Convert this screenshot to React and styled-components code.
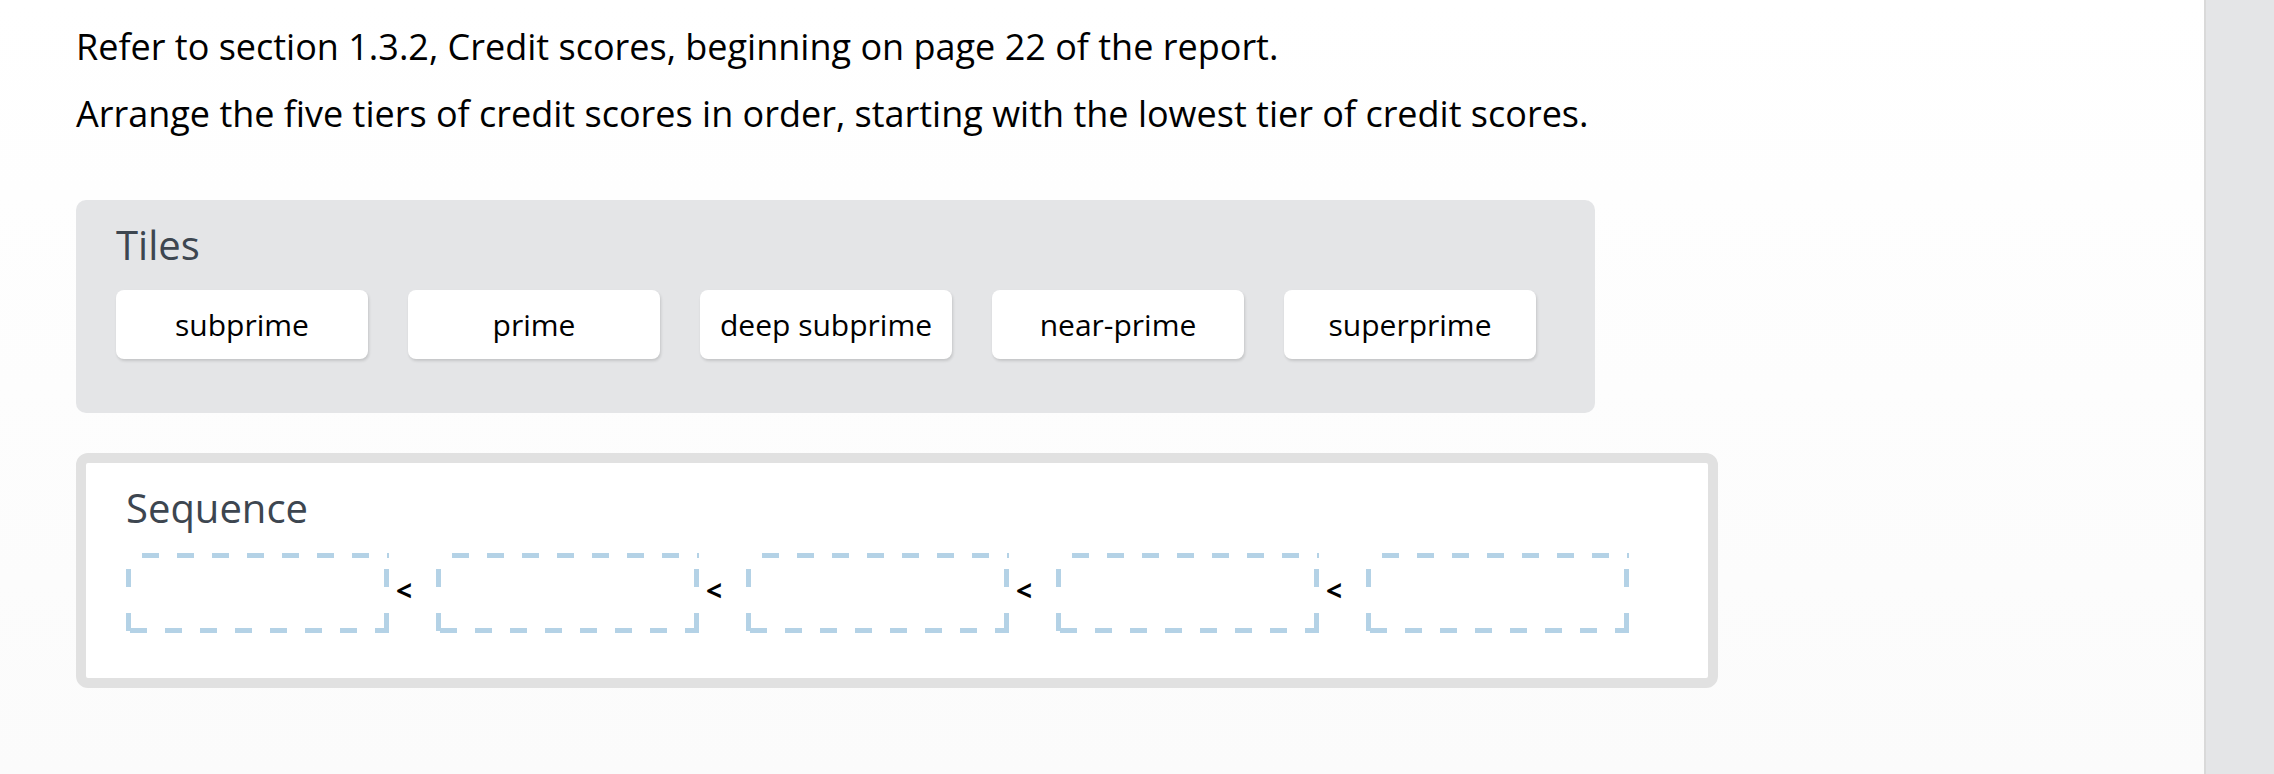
import React from "react";
import styled, { createGlobalStyle } from "styled-components";

const GlobalStyle = createGlobalStyle`
  html, body {
    margin: 0;
    padding: 0;
    background: #ffffff;
  }
  body {
    font-family: "Open Sans", "Noto Sans", "Liberation Sans", sans-serif;
    color: #000000;
  }
  * { box-sizing: border-box; }
`;

const Page = styled.div`
  display: flex;
  width: 2274px;
  height: 774px;
  overflow: hidden;
  background: linear-gradient(#ffffff, #fbfbfb);
`;

const Main = styled.main`
  flex: 1;
  padding: 25px 0 0 76px;
`;

const Rail = styled.aside`
  width: 70px;
  background: #e4e5e7;
  border-left: 2px solid #d9d9d9;
`;

const Prompt = styled.p`
  margin: 0 0 ${(p) => p.$gap || 0}px 0;
  font-size: 36px;
  line-height: 44px;
  color: #000;
`;

const TilesPanel = styled.section`
  margin-top: 64px;
  width: 1519px;
  background: #e4e5e7;
  border-radius: 10px;
  padding: 20px 40px 54px 40px;
`;

const SequencePanel = styled.section`
  margin-top: 40px;
  width: 1642px;
  background: #ffffff;
  border: 10px solid #e1e1e1;
  border-radius: 12px;
  padding: 20px 40px 45px 40px;
`;

const Label = styled.h2`
  margin: 0 0 20px 0;
  font-size: 40px;
  line-height: 50px;
  font-weight: 400;
  color: #3d4650;
`;

const TileRow = styled.div`
  display: flex;
  gap: 40px;
`;

const Tile = styled.div`
  width: 252px;
  height: 69px;
  background: #ffffff;
  border-radius: 8px;
  box-shadow: 1px 2px 3px rgba(0, 0, 0, 0.14);
  display: flex;
  align-items: center;
  justify-content: center;
  font-size: 30px;
  color: #000;
`;

const SlotRow = styled.div`
  display: flex;
  align-items: center;
`;

const dash = "#b4d2e6";

const Slot = styled.div`
  width: 263px;
  height: 80px;
  background:
    repeating-linear-gradient(to right, transparent 0 16px, ${dash} 16px 33px, transparent 33px 35px) top left / 100% 5px no-repeat,
    repeating-linear-gradient(to right, transparent 0 4px, ${dash} 4px 21px, transparent 21px 35px) bottom left / 100% 5px no-repeat,
    repeating-linear-gradient(to bottom, transparent 0 16px, ${dash} 16px 34px, transparent 34px 44px) top left / 5px 100% no-repeat,
    repeating-linear-gradient(to bottom, transparent 0 16px, ${dash} 16px 34px, transparent 34px 44px) top right / 5px 100% no-repeat;
`;

const Separator = styled.span`
  width: 47px;
  padding-left: 7px;
  font-size: 28px;
  font-weight: 700;
  line-height: 1;
  color: #000;
  margin-top: -6px;
`;

const tiles = ["subprime", "prime", "deep subprime", "near-prime", "superprime"];

export default function App() {
  return (
    <>
      <GlobalStyle />
      <Page>
        <Main>
          <Prompt $gap={23}>
            Refer to section 1.3.2, Credit scores, beginning on page 22 of the report.
          </Prompt>
          <Prompt>
            Arrange the five tiers of credit scores in order, starting with the lowest tier of credit scores.
          </Prompt>
          <TilesPanel>
            <Label>Tiles</Label>
            <TileRow>
              {tiles.map((t) => (
                <Tile key={t}>{t}</Tile>
              ))}
            </TileRow>
          </TilesPanel>
          <SequencePanel>
            <Label>Sequence</Label>
            <SlotRow>
              {[0, 1, 2, 3, 4].map((i) => (
                <React.Fragment key={i}>
                  {i > 0 && <Separator>&lt;</Separator>}
                  <Slot />
                </React.Fragment>
              ))}
            </SlotRow>
          </SequencePanel>
        </Main>
        <Rail />
      </Page>
    </>
  );
}
